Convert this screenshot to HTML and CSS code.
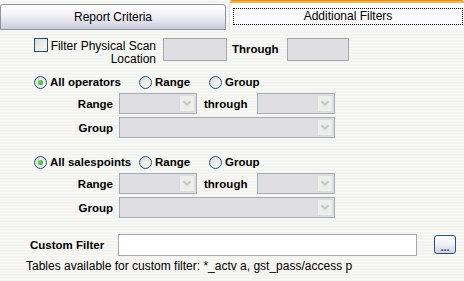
FILE: index.html
```html
<!DOCTYPE html>
<html lang="en">
<head>
    <meta charset="UTF-8">
    <title>Additional Filters</title>
    <link rel="stylesheet" href="styles.css">
</head>
<body>
    <div class="tabs">
        <div class="tab">Report Criteria</div>
        <div class="tab active"><span class="focus">Additional Filters</span></div>
    </div>

    <div class="panel">
        <div class="scan-row">
            <span class="check"></span>
            <span class="scan-label">Filter Physical Scan<br>Location</span>
            <span class="field scan-from"></span>
            <span class="bold through-lbl">Through</span>
            <span class="field scan-to"></span>
        </div>

        <div class="radio-row">
            <span class="opt opt-first"><span class="radio on"></span>All operators</span>
            <span class="opt opt-mid"><span class="radio"></span>Range</span>
            <span class="opt"><span class="radio"></span>Group</span>
        </div>
        <div class="sel-row">
            <span class="bold lbl">Range</span>
            <span class="select short"><span class="arrow"></span></span>
            <span class="bold through">through</span>
            <span class="select short"><span class="arrow"></span></span>
        </div>
        <div class="sel-row">
            <span class="bold lbl">Group</span>
            <span class="select long"><span class="arrow"></span></span>
        </div>

        <div class="radio-row second">
            <span class="opt opt-first"><span class="radio on"></span>All salespoints</span>
            <span class="opt opt-mid"><span class="radio"></span>Range</span>
            <span class="opt"><span class="radio"></span>Group</span>
        </div>
        <div class="sel-row">
            <span class="bold lbl">Range</span>
            <span class="select short"><span class="arrow"></span></span>
            <span class="bold through">through</span>
            <span class="select short"><span class="arrow"></span></span>
        </div>
        <div class="sel-row">
            <span class="bold lbl">Group</span>
            <span class="select long"><span class="arrow"></span></span>
        </div>

        <div class="custom-row">
            <span class="bold custom-lbl">Custom Filter</span>
            <span class="custom-input"></span>
            <button class="dots">...</button>
        </div>
        <p class="hint">Tables available for custom filter: *_actv a, gst_pass/access p</p>
    </div>
</body>
</html>
```

FILE: styles.css
```css
body {
    margin: 0;
    width: 464px;
    height: 281px;
    overflow: hidden;
    font-family: "Liberation Sans", Arial, sans-serif;
    font-size: 12px;
    color: #000;
    background-color: #f3f3ef;
    background-image: repeating-linear-gradient(to bottom, rgba(255,255,255,0.5) 0 1px, transparent 1px 3px);
}
.tabs {
    display: flex;
    align-items: flex-end;
    height: 30px;
}
.tab {
    box-sizing: border-box;
    width: 226px;
    height: 26px;
    border: 1px solid #8e939c;
    border-radius: 3px 3px 0 0;
    background: linear-gradient(to bottom, #ffffff, #eeeef5 50%, #cbcbdc);
    text-align: center;
    line-height: 24px;
}
.tab.active {
    flex: 1;
    width: auto;
    height: 30px;
    margin-left: 3px;
    padding: 8px 1px 0 3px;
    border: none;
    border-left: 1px solid #e2e2e6;
    border-radius: 3px 3px 0 0;
    background: linear-gradient(to bottom, #e68b2c 0 1px, #f7b33a 1px 3px, #fbfbfd 3px);
    line-height: 15px;
}
.focus {
    display: block;
    height: 15px;
    border: 1px dotted #000;
}
.panel {
    padding-top: 8px;
}
.bold {
    font-weight: bold;
    font-size: 11.5px;
}
.scan-row {
    display: flex;
    align-items: flex-start;
    padding-left: 34px;
}
.check {
    box-sizing: border-box;
    width: 14px;
    height: 14px;
    border: 1px solid #1c5180;
    background: linear-gradient(135deg, #dcdcd6, #fbfbf9);
}
.scan-label {
    width: 106px;
    margin-left: 2px;
    padding-top: 2px;
    line-height: 13px;
    text-align: right;
}
.field {
    box-sizing: border-box;
    height: 23px;
    border: 1px solid #a5a9ae;
    background: #dfdfe3;
}
.scan-from {
    width: 64px;
    margin-left: 7px;
}
.through-lbl {
    margin: 4px 0 0 5px;
    line-height: 15px;
}
.scan-to {
    width: 62px;
    margin-left: 8px;
}
.radio-row {
    display: flex;
    align-items: center;
    height: 16px;
    margin-top: 8px;
    padding-left: 34px;
    font-weight: bold;
    font-size: 11.5px;
}
.radio-row.second {
    margin-top: 16px;
}
.opt {
    display: flex;
    align-items: center;
    gap: 3px;
}
.opt-first {
    width: 105px;
}
.opt-mid {
    width: 70px;
}
.radio {
    box-sizing: border-box;
    width: 13px;
    height: 13px;
    border: 1px solid #1c5180;
    border-radius: 50%;
    background: linear-gradient(135deg, #dcdcd6, #fbfbf9);
    position: relative;
}
.radio.on::after {
    content: "";
    position: absolute;
    left: 3px;
    top: 3px;
    width: 5px;
    height: 5px;
    border-radius: 50%;
    background: radial-gradient(circle at 40% 40%, #6ce06c, #1e9a1e);
}
.sel-row {
    display: flex;
    align-items: center;
    height: 21px;
    margin-top: 3px;
}
.lbl {
    width: 113px;
    text-align: right;
}
.select {
    box-sizing: border-box;
    display: flex;
    justify-content: flex-end;
    height: 21px;
    margin-left: 6px;
    padding: 1px;
    border: 1px solid #a5acb5;
    background: #dedee2;
}
.select.short {
    width: 78px;
}
.select.long {
    width: 216px;
}
.arrow {
    box-sizing: border-box;
    width: 16px;
    border: 1px solid #dcdcdc;
    background: #eeeeec;
    position: relative;
}
.arrow::after {
    content: "";
    position: absolute;
    left: 4px;
    top: 3px;
    width: 4px;
    height: 4px;
    border-right: 2px solid #c4c7ce;
    border-bottom: 2px solid #c4c7ce;
    transform: rotate(45deg);
}
.through {
    margin-left: 7px;
    width: 47px;
}
.custom-row {
    display: flex;
    align-items: flex-start;
    margin-top: 16px;
    padding-left: 30px;
}
.custom-lbl {
    width: 88px;
    line-height: 22px;
}
.custom-input {
    box-sizing: border-box;
    width: 299px;
    height: 22px;
    border: 1px solid #a5a9ae;
    background: #fff;
}
.dots {
    box-sizing: border-box;
    width: 22px;
    height: 19px;
    margin: 1px 0 0 17px;
    padding: 4px 0 0;
    border: 1px solid #2c4f7c;
    border-radius: 3px;
    background: linear-gradient(to bottom, #ffffff, #eef0f6 50%, #cdd2e0);
    font-family: "Liberation Sans", Arial, sans-serif;
    font-size: 11px;
    font-weight: bold;
    color: #2a3a5a;
    line-height: 10px;
}
.hint {
    margin: 3px 0 0 26px;
    line-height: 15px;
}
```
